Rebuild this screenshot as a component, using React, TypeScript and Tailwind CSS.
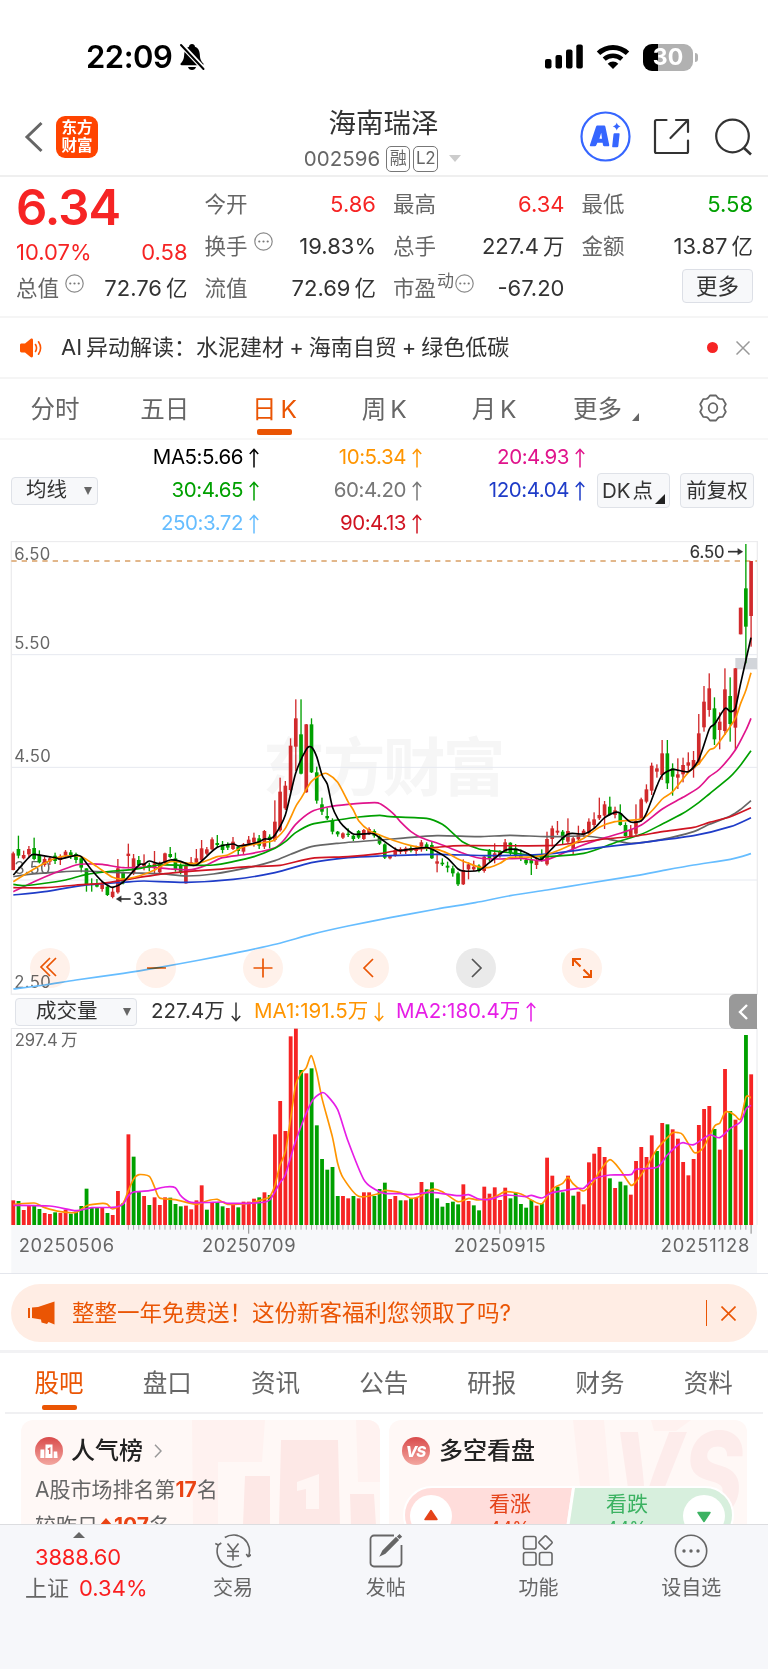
import React from "react";

type Candle = [up: number, bodyTop: number, bodyBottom: number, high: number, low: number];
type Point = [number, number];

// Plot space is three units per css pixel
const FIRST_X = 39.6;
const STEP = 15.7;
const barX = (i: number) => FIRST_X + STEP * i;

const CANDLES: Candle[] = [
  [1, 955, 1005, 950, 1006], [0, 942, 962, 902, 970], [1, 960, 970, 947, 973], [1, 942, 958, 933, 968],
  [0, 939, 972, 908, 976], [0, 960, 982, 946, 985], [1, 972, 990, 965, 995], [1, 970, 980, 964, 990],
  [0, 962, 978, 953, 987], [1, 965, 975, 958, 990], [1, 950, 962, 945, 970], [0, 952, 960, 945, 972],
  [0, 957, 975, 953, 985], [0, 970, 998, 965, 1012], [0, 1000, 1048, 1000, 1070], [0, 1046, 1050, 1030, 1070],
  [0, 1045, 1055, 1032, 1057], [1, 1048, 1062, 1040, 1070], [0, 1055, 1080, 1050, 1083], [1, 1070, 1086, 1055, 1090],
  [1, 1000, 1072, 972, 1076], [0, 1013, 1045, 1010, 1048], [1, 956, 963, 926, 1000], [1, 970, 1015, 957, 1020],
  [0, 975, 990, 963, 995], [1, 985, 993, 958, 1006], [0, 990, 998, 983, 1008], [1, 985, 1000, 948, 1015],
  [1, 985, 1012, 980, 1015], [1, 955, 985, 953, 987], [0, 957, 966, 936, 970], [0, 970, 1003, 953, 1010],
  [0, 990, 1012, 985, 1018], [1, 990, 1045, 985, 1046], [1, 982, 988, 966, 993], [1, 970, 983, 942, 987],
  [1, 940, 975, 915, 978], [1, 943, 956, 936, 960], [1, 913, 943, 907, 946], [0, 924, 930, 900, 936],
  [0, 928, 945, 918, 955], [0, 928, 938, 922, 945], [1, 920, 942, 906, 945], [0, 935, 948, 932, 960],
  [1, 928, 950, 924, 957], [1, 914, 926, 903, 930], [1, 908, 922, 893, 935], [0, 910, 932, 900, 942],
  [1, 888, 935, 885, 942], [0, 905, 915, 898, 940], [1, 860, 915, 796, 920], [1, 770, 886, 728, 890],
  [1, 752, 820, 738, 825], [1, 632, 765, 610, 770], [1, 550, 635, 493, 708], [0, 598, 716, 493, 718],
  [1, 568, 772, 567, 773], [0, 568, 712, 550, 714], [0, 712, 797, 695, 806], [0, 808, 830, 788, 840],
  [0, 843, 850, 818, 855], [0, 858, 890, 850, 898], [0, 890, 898, 888, 905], [1, 895, 908, 892, 912],
  [0, 896, 900, 880, 906], [0, 902, 912, 898, 918], [0, 888, 908, 885, 912], [1, 885, 912, 882, 915],
  [1, 882, 896, 877, 900], [0, 888, 902, 883, 908], [0, 905, 926, 900, 930], [0, 928, 968, 925, 972],
  [1, 963, 970, 960, 973], [1, 945, 963, 937, 965], [1, 942, 950, 937, 957], [1, 940, 950, 935, 957],
  [0, 940, 947, 932, 952], [1, 942, 948, 932, 962], [1, 922, 935, 915, 950], [0, 928, 938, 922, 948],
  [0, 930, 970, 920, 972], [1, 979, 986, 955, 1012], [0, 983, 988, 970, 993], [0, 992, 998, 980, 1012],
  [0, 1000, 1015, 992, 1025], [0, 1015, 1048, 1010, 1053], [1, 1005, 1048, 973, 1050], [1, 988, 1003, 982, 1033],
  [1, 995, 1003, 977, 1008], [0, 992, 1008, 988, 1012], [1, 965, 1008, 962, 1013], [0, 948, 970, 942, 980],
  [1, 955, 968, 925, 985], [1, 950, 962, 945, 968], [1, 922, 950, 912, 953], [0, 923, 952, 922, 960],
  [0, 940, 960, 927, 970], [0, 962, 972, 943, 978], [0, 975, 985, 970, 990], [0, 975, 985, 962, 1020],
  [1, 975, 990, 965, 1002], [0, 965, 975, 943, 980], [1, 912, 988, 890, 992], [1, 880, 912, 872, 935],
  [1, 887, 893, 858, 900], [0, 890, 915, 885, 930], [1, 888, 920, 850, 925], [1, 910, 942, 905, 957],
  [1, 898, 913, 872, 920], [1, 887, 900, 882, 905], [1, 860, 895, 850, 898], [1, 853, 870, 832, 880],
  [1, 840, 850, 788, 855], [1, 808, 842, 798, 882], [0, 815, 838, 785, 842], [1, 826, 840, 815, 850],
  [0, 835, 870, 808, 872], [0, 870, 903, 862, 905], [1, 885, 905, 870, 908], [1, 858, 896, 808, 900],
  [1, 793, 855, 788, 860], [1, 763, 800, 748, 805], [1, 692, 767, 683, 780], [1, 700, 710, 688, 728],
  [1, 655, 720, 615, 735], [0, 655, 745, 615, 762], [0, 700, 725, 685, 782], [1, 718, 728, 670, 762],
  [1, 690, 718, 668, 742], [1, 682, 692, 652, 712], [1, 675, 700, 648, 728], [1, 595, 685, 537, 690],
  [1, 500, 577, 453, 590], [1, 460, 525, 415, 545], [0, 520, 613, 487, 630], [1, 560, 585, 532, 643],
  [1, 463, 588, 400, 600], [0, 483, 567, 427, 620], [1, 400, 578, 399, 645], [1, 218, 298, 218, 298],
  [0, 160, 275, 27, 385], [1, 78, 243, 78, 335],
];

// Negative heights in the list mark falling days
const VOLUMES = [
  646, -648, 675, 662, -660, -672, 684, 687, -682, 684, 674, -686, -680, -663, -611, -668, -668, 668, -684, 690,
  618, -655, 448, -515, -618, 633, -660, 637, 660, 637, -638, -657, -664, 662, 673, 646, 601, -674, 654, -651,
  -664, 669, 655, -667, 650, 650, 641, -637, 622, -630, 448, 348, 438, 154, 131, -255, 265, -250, -421, -522,
  -554, -546, -633, 633, 640, -633, 640, 622, 622, -633, -612, -593, 642, 633, -646, 646, -640, 638, 591, -613,
  -592, -640, -665, -654, -650, -658, 598, 648, -661, -676, 605, 626, 607, 645, 608, -640, -623, -657, -668, -645,
  662, -655, 518, 572, -605, -622, 572, -632, 620, 658, 532, 506, 486, 516, -580, 609, -590, -601, 629, 528,
  486, 516, 451, -498, 414, -418, 433, 461, 531, 571, 522, 420, 372, 363, -432, 494, 252, -378, 404, 494,
  -150, 268,
];

const PRICE_LINES: { color: string; points: Point[] }[] = [
  {
    color: "#66bdff",
    points: [[40, 1362], [134, 1350], [228, 1335], [370, 1315], [479, 1297], [600, 1275], [700, 1255], [830, 1227], [934, 1198], [1044, 1173], [1170, 1148], [1311, 1122], [1426, 1103], [1531, 1082], [1641, 1065], [1751, 1047], [1908, 1022], [1987, 1007], [2081, 990], [2191, 973], [2253, 956]],
  },
  {
    color: "#666666",
    points: [[40, 1025], [86, 1018], [165, 1012], [244, 1008], [340, 1012], [401, 1014], [479, 1016], [558, 1023], [640, 1017], [762, 994], [825, 977], [872, 958], [934, 935], [1013, 925], [1139, 915], [1201, 910], [1311, 902], [1434, 905], [1531, 901], [1641, 905], [1751, 903], [1814, 910], [1892, 925], [1987, 913], [2081, 890], [2128, 868], [2191, 843], [2222, 823], [2253, 797]],
  },
  {
    color: "#e0148c",
    points: [[40, 1070], [102, 1040], [165, 1013], [228, 990], [260, 987], [307, 988], [370, 998], [448, 996], [511, 1002], [575, 1004], [620, 990], [668, 968], [746, 957], [825, 938], [856, 910], [887, 868], [934, 830], [982, 816], [1044, 808], [1123, 803], [1142, 807], [1179, 835], [1201, 860], [1233, 890], [1264, 908], [1327, 930], [1390, 955], [1437, 969], [1500, 972], [1563, 970], [1626, 977], [1673, 962], [1735, 935], [1798, 913], [1861, 895], [1924, 870], [1987, 822], [2049, 787], [2097, 757], [2128, 725], [2159, 702], [2206, 645], [2238, 585], [2253, 550]],
  },
  {
    color: "#00a000",
    points: [[40, 1048], [71, 1052], [118, 1047], [197, 1035], [260, 1018], [340, 1008], [401, 1003], [479, 990], [558, 991], [640, 990], [699, 980], [762, 965], [825, 940], [856, 920], [887, 893], [934, 868], [1013, 855], [1076, 846], [1139, 841], [1170, 845], [1280, 850], [1327, 868], [1359, 895], [1390, 922], [1437, 942], [1500, 950], [1563, 957], [1626, 965], [1751, 955], [1845, 923], [1924, 898], [1987, 867], [2049, 835], [2097, 802], [2128, 777], [2191, 725], [2222, 690], [2253, 647]],
  },
  {
    color: "#1f3cc8",
    points: [[40, 1080], [134, 1070], [244, 1052], [369, 1042], [432, 1038], [558, 1042], [700, 1033], [825, 1013], [934, 983], [1044, 968], [1139, 963], [1311, 958], [1469, 962], [1641, 957], [1751, 943], [1908, 925], [2081, 902], [2191, 875], [2253, 848]],
  },
  {
    color: "#d01422",
    points: [[40, 1058], [134, 1058], [228, 1050], [307, 1045], [401, 1030], [495, 1016], [558, 1010], [652, 1003], [746, 995], [840, 991], [934, 970], [1044, 965], [1139, 956], [1186, 948], [1311, 937], [1390, 932], [1641, 932], [1735, 922], [1814, 912], [1908, 903], [1987, 890], [2081, 877], [2128, 862], [2191, 845], [2253, 818]],
  },
  {
    color: "#ff9500",
    points: [[40, 1040], [102, 1002], [165, 970], [197, 963], [244, 965], [291, 995], [338, 1027], [369, 1032], [417, 1023], [464, 1005], [511, 980], [542, 982], [574, 986], [605, 982], [652, 965], [683, 960], [730, 935], [777, 925], [809, 920], [825, 913], [856, 880], [887, 815], [903, 790], [934, 740], [966, 718], [982, 716], [1013, 742], [1044, 800], [1060, 825], [1076, 857], [1107, 886], [1139, 900], [1186, 918], [1233, 932], [1264, 938], [1311, 943], [1343, 955], [1374, 972], [1406, 985], [1437, 996], [1469, 997], [1500, 985], [1531, 967], [1594, 966], [1634, 960], [1684, 943], [1751, 910], [1798, 877], [1845, 860], [1924, 852], [1955, 828], [1987, 792], [2018, 770], [2065, 712], [2097, 685], [2128, 645], [2144, 638], [2175, 597], [2206, 550], [2222, 505], [2238, 465], [2253, 413]],
  },
  {
    color: "#000000",
    points: [[40, 1020], [86, 968], [102, 958], [165, 968], [181, 972], [228, 961], [244, 965], [275, 1005], [307, 1040], [322, 1050], [338, 1057], [369, 1042], [417, 990], [432, 988], [448, 978], [479, 986], [511, 975], [542, 979], [570, 990], [589, 990], [605, 978], [652, 937], [699, 927], [715, 933], [746, 928], [777, 920], [793, 912], [809, 912], [825, 900], [856, 840], [887, 715], [919, 643], [934, 636], [950, 665], [966, 720], [982, 748], [997, 815], [1013, 850], [1029, 872], [1060, 897], [1107, 896], [1123, 897], [1154, 920], [1186, 942], [1201, 947], [1233, 942], [1280, 938], [1311, 950], [1343, 970], [1374, 1002], [1390, 1008], [1437, 1006], [1469, 982], [1516, 946], [1547, 943], [1578, 953], [1610, 970], [1626, 972], [1657, 940], [1704, 897], [1751, 897], [1782, 880], [1814, 848], [1845, 832], [1861, 835], [1892, 861], [1924, 857], [1940, 833], [1971, 752], [1987, 720], [2018, 703], [2065, 710], [2097, 672], [2128, 582], [2144, 567], [2175, 520], [2191, 530], [2206, 520], [2222, 445], [2253, 308]],
  },
];

const VOLUME_LINES: { color: string; points: Point[] }[] = [
  {
    color: "#ff9500",
    points: [[40, 658], [102, 654], [118, 660], [134, 668], [181, 680], [228, 682], [260, 662], [307, 655], [322, 658], [338, 672], [369, 655], [385, 617], [401, 582], [417, 569], [448, 574], [464, 607], [479, 639], [526, 644], [589, 658], [620, 648], [652, 643], [683, 658], [746, 655], [793, 642], [809, 635], [825, 600], [840, 540], [856, 500], [872, 400], [887, 300], [903, 265], [919, 248], [934, 212], [950, 262], [966, 340], [997, 455], [1013, 535], [1029, 578], [1076, 634], [1139, 625], [1154, 616], [1201, 623], [1233, 640], [1264, 632], [1296, 613], [1327, 620], [1374, 650], [1406, 640], [1437, 645], [1484, 636], [1516, 620], [1563, 627], [1594, 645], [1626, 656], [1657, 612], [1688, 595], [1704, 577], [1720, 597], [1751, 618], [1782, 588], [1798, 560], [1830, 524], [1861, 555], [1892, 600], [1908, 590], [1940, 545], [1971, 492], [2002, 458], [2018, 443], [2034, 443], [2049, 450], [2081, 501], [2097, 500], [2112, 485], [2144, 423], [2159, 415], [2175, 382], [2191, 382], [2206, 392], [2222, 402], [2238, 336], [2253, 338]],
  },
  {
    color: "#e61ee6",
    points: [[40, 661], [149, 663], [228, 677], [275, 668], [338, 667], [369, 658], [385, 632], [401, 621], [448, 617], [495, 606], [526, 608], [542, 632], [574, 652], [668, 651], [683, 655], [777, 653], [809, 645], [840, 593], [856, 570], [887, 468], [934, 352], [966, 323], [982, 332], [1013, 374], [1044, 468], [1091, 583], [1123, 612], [1154, 625], [1201, 626], [1233, 629], [1296, 622], [1374, 632], [1406, 629], [1437, 642], [1469, 643], [1516, 630], [1578, 635], [1594, 631], [1626, 639], [1657, 623], [1735, 610], [1751, 610], [1782, 582], [1830, 570], [1892, 569], [1908, 553], [1971, 547], [2002, 510], [2034, 480], [2049, 473], [2081, 479], [2128, 450], [2159, 458], [2191, 430], [2222, 410], [2238, 372], [2253, 361]],
  },
];

// Catmull-Rom through the points, softened so peaks don't overshoot
function smooth(points: Point[]) {
  let d = `M${points[0][0]} ${points[0][1]}`;
  for (let i = 0; i < points.length - 1; i++) {
    const p0 = points[i - 1] || points[i];
    const p1 = points[i];
    const p2 = points[i + 1];
    const p3 = points[i + 2] || p2;
    const k = 8;
    d += `C${p1[0] + (p2[0] - p0[0]) / k} ${p1[1] + (p2[1] - p0[1]) / k} ${p2[0] - (p3[0] - p1[0]) / k} ${p2[1] - (p3[1] - p1[1]) / k} ${p2[0]} ${p2[1]}`;
  }
  return d;
}

const StatusBar: React.FC = () => (
  <div className="h-[96px] flex items-start justify-between pl-[86px] pr-[70px] pt-[39px]">
    <div className="flex items-center gap-[7px] h-[36px]">
      <span className="text-[31px] leading-[36px] font-semibold text-black tracking-[-0.5px]">22:09</span>
      <svg className="w-[26px] h-[28px]" viewBox="0 0 26 28">
        <path
          d="M13 1c1.700 0 2.800 1.100 3 2.700 3 1.100 4.600 3.800 4.800 7.600.2 4.600 1 6.700 3.400 9 .8.9.3 2-.9 2H2.700c-1.200 0-1.700-1.100-.9-2 2.400-2.300 3.200-4.400 3.400-9C5.400 7.500 7 4.800 10 3.700 10.200 2.100 11.300 1 13 1z"
          fill="#000"
        />
        <path d="M9 24h8c-.5 2-2 3-4 3s-3.500-1-4-3z" fill="#000" />
        <path d="M1.500 1l24 25.500" stroke="#fff" strokeWidth="5" />
        <path d="M2 2l22.500 24" stroke="#000" strokeWidth="2" strokeLinecap="round" />
      </svg>
    </div>
    <div className="flex items-center h-[36px]">
      <svg className="w-[39px] h-[26px]" viewBox="0 0 39 26">
        <rect x="0" y="15" width="6.500" height="9.500" rx="2" />
        <rect x="10.500" y="11" width="6.500" height="13.500" rx="2" />
        <rect x="21" y="5.500" width="6.500" height="19" rx="2" />
        <rect x="31.300" y="0.500" width="6.500" height="24" rx="2" />
      </svg>
      <svg className="w-[34px] h-[26px] ml-[12px]" viewBox="0 0 34 26">
        <path d="M2.500 9.200a21 21 0 0 1 29 0" fill="none" stroke="#000" strokeWidth="5" />
        <path d="M8.200 15.200a13 13 0 0 1 17.600 0" fill="none" stroke="#000" strokeWidth="4.500" />
        <path d="M17 25l-5.300-5.300a7.800 7.800 0 0 1 10.600 0z" fill="#000" />
      </svg>
      <div className="ml-[13px] w-[50px] h-[27px] rounded-[9px] overflow-hidden flex bg-[#b1b1b1] relative">
        <span className="w-[15px] h-full bg-black" />
        <span className="absolute inset-0 text-center text-white font-bold text-[23px] leading-[27px]">30</span>
      </div>
      <span className="w-[3px] h-[9px] ml-[2px] rounded-r-full bg-[#b1b1b1]" />
    </div>
  </div>
);

const Header: React.FC = () => (
  <div className="h-[81px] border-b-2 border-[#efefef] flex items-start justify-between pl-[24px] pr-[16px]">
    <div className="w-[220px] flex items-center gap-[12px] h-[81px]">
      <svg className="w-[20px] h-[32px]" viewBox="0 0 20 32">
        <path d="M17.500 2L3 16l14.500 14" fill="none" stroke="#666" strokeWidth="3" />
      </svg>
      <div className="w-[42px] h-[42px] rounded-[9px] bg-[#ff4400] text-white font-bold text-[15.500px] leading-[18px] text-center pt-[3px]">
        <div>东方</div>
        <div>财富</div>
      </div>
    </div>
    <div className="flex flex-col items-center">
      <div className="text-[27.500px] leading-[36px] text-[#333] mt-[9px] -ml-px">海南瑞泽</div>
      <div className="flex items-center h-[36px] pr-[3px]">
        <span className="text-[20.500px] text-[#666] leading-[26px]">002596</span>
        <span className="ml-[6px] w-[24px] h-[26px] border-[1.500px] border-[#777] rounded-[5px] text-[17px] leading-[23px] text-center text-[#666]">融</span>
        <span className="ml-[3px] w-[25px] h-[26px] border-[1.500px] border-[#777] rounded-[5px] text-[17px] leading-[23px] text-center text-[#666] tracking-tight">L2</span>
        <svg className="ml-[11px] w-[12px] h-[8px]" viewBox="0 0 12 8">
          <path d="M0 0h12L6 7z" fill="#ccc" />
        </svg>
      </div>
    </div>
    <div className="w-[228px] flex items-center justify-end h-[81px]">
      <svg className="w-[51px] h-[51px]" viewBox="0 0 51 51" fill="#3666ff">
        <circle cx="25.500" cy="25.500" r="24" fill="none" stroke="#3666ff" strokeWidth="2.200" />
        <path
          fillRule="evenodd"
          d="M17.500 14.500h6.300c.9 0 1.400.5 1.600 1.300l3.800 18c.2 1-.2 1.500-1.200 1.500h-3.700c-.8 0-1.200-.4-1.300-1.200l-.4-2.400h-5.200l-1 2.400c-.3.8-.8 1.200-1.600 1.200H11c-1 0-1.400-.6-1-1.500l6-18c.3-.9.8-1.300 1.500-1.300zM19.400 27.800h2.600l-.8-6z"
        />
        <path d="M34.500 22.200h4.200c.6 0 1 .4.900 1l-1.300 12c-.1.700-.5 1-1.100 1h-4.100c-.7 0-1-.4-.9-1l1.300-12c.1-.7.5-1 1-1z" />
        <path d="M36.800 11.500c.6 2.400 1.400 3.200 3.800 4-2.400.8-3.200 1.600-3.800 4-.8-2.400-1.600-3.200-4-4 2.400-.8 3.200-1.600 4-4z" />
      </svg>
      <svg className="w-[37px] h-[37px] ml-[22px]" viewBox="0 0 37 37" fill="none" stroke="#333" strokeWidth="2.200" strokeLinejoin="round" strokeLinecap="round">
        <path d="M13.500 2H3.500a1.500 1.500 0 0 0-1.500 1.500v30A1.500 1.500 0 0 0 3.500 35h30a1.500 1.500 0 0 0 1.500-1.500v-11" />
        <path d="M23 2h12v12M35 2L17.500 20" />
      </svg>
      <svg className="w-[37px] h-[38px] ml-[25px]" viewBox="0 0 37 38" fill="none" stroke="#333" strokeWidth="2.200">
        <circle cx="17.500" cy="18" r="16.300" />
        <path d="M28.500 29.500l7.500 7" strokeWidth="2.600" />
      </svg>
    </div>
  </div>
);

const Dots: React.FC = () => (
  <svg className="w-[19px] h-[19px] mb-[9px] ml-[6px]" viewBox="0 0 19 19">
    <circle cx="9.500" cy="9.500" r="8.700" fill="none" stroke="#8a8a8a" strokeWidth="1.200" />
    <circle cx="5.300" cy="9.500" r="1.100" fill="#777" />
    <circle cx="9.500" cy="9.500" r="1.100" fill="#777" />
    <circle cx="13.700" cy="9.500" r="1.100" fill="#777" />
  </svg>
);

const Stat: React.FC<{ label: string; value: string; unit?: string; color?: string; dots?: boolean; sup?: string }> = ({
  label,
  value,
  unit,
  color = "text-[#333]",
  dots,
  sup,
}) => (
  <div className="flex items-center justify-between h-[42px] whitespace-nowrap">
    <span className="flex items-center text-[21.500px] text-[#666]">
      {label}
      {sup && <span className="text-[17px] mb-[12px] ml-[1px] -mr-[5px]">{sup}</span>}
      {dots && <Dots />}
    </span>
    <span className={`text-[22px] ${color}`}>
      {value}
      {unit && <span className="ml-[4px] text-[21.500px]">{unit}</span>}
    </span>
  </div>
);

const Quote: React.FC = () => (
  <div className="h-[141px] border-b-2 border-[#f5f5f5] grid grid-cols-4 gap-x-[17px] pl-[16px] pr-[15px] pt-[6px]">
    <div>
      <div className="h-[48px] pt-px text-[49px] leading-[48px] font-semibold text-[#f62424] tracking-[-1px]">6.34</div>
      <div className="h-[36px] pt-[6px] flex items-center justify-between text-[22px] text-[#f62424]">
        <span>10.07%</span>
        <span>0.58</span>
      </div>
      <Stat label="总值" value="72.76" unit="亿" dots />
    </div>
    <div>
      <Stat label="今开" value="5.86" color="text-[#f62424]" />
      <Stat label="换手" value="19.83%" dots />
      <Stat label="流值" value="72.69" unit="亿" />
    </div>
    <div>
      <Stat label="最高" value="6.34" color="text-[#f62424]" />
      <Stat label="总手" value="227.4" unit="万" />
      <Stat label="市盈" value="-67.20" sup="动" dots />
    </div>
    <div>
      <Stat label="最低" value="5.58" color="text-[#00a000]" />
      <Stat label="金额" value="13.87" unit="亿" />
      <div className="flex justify-end pt-[2px]">
        <button className="w-[71px] h-[34px] border border-[#dcdfe6] bg-[#f7f8fa] rounded-[4px] text-[21.500px] leading-[32px] text-[#333]">更多</button>
      </div>
    </div>
  </div>
);

const AiRow: React.FC = () => (
  <div className="h-[61px] border-b-2 border-[#f5f5f5] flex items-center pl-[20px] pr-[18px]">
    <svg className="w-[23px] h-[20px]" viewBox="0 0 23 20">
      <path d="M1.500 5.500H5L10.500 1c1.200-.9 2.500-.3 2.500 1v16c0 1.300-1.300 1.900-2.500 1L5 14.500H1.500c-.8 0-1.500-.6-1.500-1.400V6.900c0-.8.7-1.400 1.500-1.400z" fill="#ff5500" />
      <path d="M15.500 6.500c1.300 2.200 1.300 4.800 0 7M18.500 3.800c2.500 3.700 2.500 8.700 0 12.400" fill="none" stroke="#ff5500" strokeWidth="1.600" strokeLinecap="round" />
    </svg>
    <span className="ml-[18px] text-[22px] text-[#333] whitespace-nowrap">
      AI<span className="ml-[4px]">异动解读：</span>水泥建材<span className="mx-[5px]">+</span>海南自贸<span className="mx-[5px]">+</span>绿色低碳
    </span>
    <span className="ml-auto w-[11px] h-[11px] rounded-full bg-[#f62424]" />
    <svg className="w-[14px] h-[14px] ml-[18px]" viewBox="0 0 14 14">
      <path d="M.5.500l13 13M13.500.500l-13 13" stroke="#999" strokeWidth="1.500" />
    </svg>
  </div>
);

const PERIODS = ["分时", "五日", "日 K", "周 K", "月 K"];

const PeriodTabs: React.FC = () => (
  <div className="h-[61px] border-b-2 border-[#f7f7f7] flex text-[24.500px] text-[#666]">
    {PERIODS.map((p) => (
      <div key={p} className={`w-[109.800px] flex flex-col items-center ${p === "日 K" ? "text-[#ea5504]" : ""}`}>
        <span className="h-[50px] leading-[60px] [word-spacing:-3px]">{p}</span>
        {p === "日 K" && <span className="w-[35px] h-[6px] rounded-[2px] bg-[#ea5504]" />}
      </div>
    ))}
    <div className="flex pl-[24px] w-[126px]">
      <span className="leading-[60px]">更多</span>
      <svg className="w-[7px] h-[8px] mt-[34px] ml-[10px]" viewBox="0 0 7 8">
        <path d="M7 0v8H0z" fill="#666" />
      </svg>
    </div>
    <svg className="w-[28px] h-[28px] mt-[15px] ml-[24px]" viewBox="0 0 28 28" fill="none" stroke="#666" strokeWidth="1.800">
      <path d="M11 1.500h6l2 2.500c.5.500 1 .8 1.800.9l3 .2 3 5.200-1.400 2.600c-.3.700-.3 1.500 0 2.200l1.400 2.600-3 5.200-3 .2c-.8.100-1.300.4-1.800.9l-2 2.500h-6l-2-2.500c-.5-.5-1-.8-1.800-.9l-3-.2-3-5.200 1.400-2.600c.3-.7.3-1.500 0-2.200L1.200 10.300l3-5.200 3-.2c.8-.1 1.300-.4 1.800-.9z" strokeLinejoin="round" />
      <ellipse cx="14" cy="14" rx="4.300" ry="4.800" />
    </svg>
  </div>
);

const Arrow: React.FC<{ down?: boolean }> = ({ down }) => (
  <svg className={`w-[10px] h-[20px] shrink-0 ${down ? "rotate-180" : ""}`} viewBox="0 0 10 20" fill="none" stroke="currentColor" strokeWidth="1.500">
    <path d="M5 19.500V1.500M.8 6L5 1.300 9.200 6" />
  </svg>
);

const MA_LEGEND = [
  ["MA5:5.66", "text-black"],
  ["10:5.34", "text-[#ff9500]"],
  ["20:4.93", "text-[#e0148c]"],
  ["30:4.65", "text-[#00a000]"],
  ["60:4.20", "text-[#777]"],
  ["120:4.04", "text-[#1f3cc8]"],
  ["250:3.72", "text-[#66bdff]"],
  ["90:4.13", "text-[#d01422]"],
];

const MaLegend: React.FC = () => (
  <div className="h-[101px] flex items-center pl-[11px] pr-[14px]">
    <div className="w-[87px] h-[28px] rounded-[4px] border border-[#dfe2e8] bg-[#f7f8fa] flex items-center justify-between pl-[14px] pr-[5px] text-[20.500px] text-[#333] leading-none">
      均线
      <svg className="w-[8px] h-[8px]" viewBox="0 0 8 8">
        <path d="M0 0h8L4 8z" fill="#666" />
      </svg>
    </div>
    <div className="w-[487px] grid grid-cols-[161px_163px_163px] text-[20.500px]">
      {MA_LEGEND.map(([text, color]) => (
        <span key={text} className={`h-[33px] flex items-center justify-end gap-[6px] tracking-[-0.45px] ${color}`}>
          {text}
          <Arrow />
        </span>
      ))}
    </div>
    <div className="ml-auto flex gap-[10px] text-[20.500px] text-[#333]">
      <div className="w-[73px] h-[35px] rounded-[4px] border border-[#dfe2e8] bg-[#f7f8fa] pl-[4px] leading-[33px] relative whitespace-nowrap">
        DK<span className="ml-[2px]">点</span>
        <svg className="absolute right-[4px] bottom-[3px] w-[10px] h-[10px]" viewBox="0 0 10 10">
          <path d="M10 0v10H0z" fill="#222" />
        </svg>
      </div>
      <div className="w-[74px] h-[35px] rounded-[4px] border border-[#dfe2e8] bg-[#f7f8fa] text-center leading-[33px]">前复权</div>
    </div>
  </div>
);

const TOOL_ICONS = [
  "M20 10l-9 9 9 9M26 10l-9 9 9 9",
  "M11 20h19",
  "M10.500 20h19M20 10.500v19",
  "M24 11l-9 9 9 9",
  "M16 11l9 9-9 9",
  "M11 18v-7h8M11.500 11.500l7 7M29 22v7h-8M28.500 28.500l-7-7",
];

const PriceChart: React.FC = () => (
  <div className="relative h-[454px]">
    <svg className="block w-[768px] h-[454px]" viewBox="0 18 2304 1362">
      <text x="1152" y="766" textAnchor="middle" fontSize="188" fontWeight="700" fill="#f6f6f6" textLength="728">东方财富</text>
      <g stroke="#e6e9f0" strokeWidth="3">
        <path d="M34 359H2271M34 697H2271M34 1035H2271" />
      </g>
      <rect x="34" y="19.500" width="2238" height="1358" fill="none" stroke="#ececee" strokeWidth="4" />
      <g fontSize="50" fill="#666" letterSpacing="1">
        <text x="43" y="74">6.50</text>
        <text x="43" y="342">5.50</text>
        <text x="43" y="681">4.50</text>
        <text x="43" y="1018">3.50</text>
        <text x="43" y="1358">2.50</text>
      </g>
      <path d="M34 78H2271" stroke="#d9a066" strokeWidth="5" strokeDasharray="16 15" />
      <rect x="2206" y="369" width="65" height="34" fill="#d2d5da" />
      {CANDLES.map(([up, top, bottom, high, low], i) => (
        <g key={i} fill={up ? "#d12a2c" : "#00a000"}>
          <rect x={barX(i) - 2} y={high} width="4" height={low - high} />
          <rect x={barX(i) - 5.500} y={top} width="11" height={bottom - top} />
        </g>
      ))}
      {PRICE_LINES.map((line) => (
        <path key={line.color} d={smooth(line.points)} fill="none" stroke={line.color} strokeWidth="5" strokeLinejoin="round" />
      ))}
      <g fontSize="50" fill="#333" stroke="#333" strokeWidth="0.500">
        <text x="399" y="1111">3.33</text>
        <path d="M392 1092H355" strokeWidth="5" />
        <path d="M348 1092l16-10v20z" />
        <text x="2069" y="70">6.50</text>
        <path d="M2184 50H2220" strokeWidth="5" />
        <path d="M2229 50l-16-10v20z" />
      </g>
    </svg>
    {/* Zoom and pan buttons float above the plot */}
    <div className="absolute left-[30px] bottom-[7px] w-[572px] flex justify-between mix-blend-multiply">
      {TOOL_ICONS.map((d, i) => (
        <svg key={d} className={`w-[40px] h-[40px] rounded-full ${i === 4 ? "bg-[#eaeaea]" : "bg-[#fff1ea]"}`} viewBox="0 0 40 40">
          <path d={d} fill="none" stroke={i === 4 ? "#555" : "#ea5504"} strokeWidth={i === 5 ? 2 : 1.700} />
        </svg>
      ))}
    </div>
  </div>
);

const VolumeHeader: React.FC = () => (
  <div className="h-[33px] flex items-center pl-[15px] pr-[11px] text-[20.500px] relative whitespace-nowrap">
    <div className="w-[122px] h-[28px] rounded-[4px] border border-[#dfe2e8] bg-[#f7f8fa] flex items-center justify-between pl-[20px] pr-[5px] text-[#333]">
      成交量
      <svg className="w-[8px] h-[8px]" viewBox="0 0 8 8">
        <path d="M0 0h8L4 8z" fill="#666" />
      </svg>
    </div>
    <span className="w-[103px] pl-[14px] flex items-center gap-[6px] text-[#333]">227.4万<Arrow down /></span>
    <span className="w-[143px] pl-[14px] flex items-center gap-[6px] text-[#ff9500]">MA1:191.5万<Arrow down /></span>
    <span className="pl-[13px] flex items-center gap-[6px] text-[#e61ee6]">MA2:180.4万<Arrow /></span>
    <div className="ml-auto w-[28px] h-[35px] rounded-l-[6px] bg-[#999] flex items-center justify-center">
      <svg className="w-[10px] h-[16px]" viewBox="0 0 10 16">
        <path d="M9 1L2 8l7 7" fill="none" stroke="#fff" strokeWidth="2.400" />
      </svg>
    </div>
  </div>
);

const VolumeChart: React.FC = () => (
  <svg className="block w-[768px] h-[246px]" viewBox="0 129 2304 738">
    <rect x="34" y="720" width="2237" height="147" fill="#f7f8fa" />
    <path d="M34 130.500H2271M34 129V720M2271 129V720" stroke="#e8e9ec" strokeWidth="3" />
    <path d="M0 865.500H2304" stroke="#e4e6ec" strokeWidth="3" />
    {VOLUMES.map((v, i) => (
      <g key={i}>
        <rect x={barX(i) - 5.500} y={Math.abs(v)} width="11.500" height={720 - Math.abs(v)} fill={v > 0 ? "#f62424" : "#00a000"} />
        {i > 21 && <rect x={barX(i) - 1.500} y="720" width="3" height={[45, 93, 141].includes(i) ? 26 : 14} fill={[45, 93, 141].includes(i) ? "#888" : "#aaa"} />}
      </g>
    ))}
    {VOLUME_LINES.map((line) => (
      <path key={line.color} d={smooth(line.points)} fill="none" stroke={line.color} strokeWidth="5" strokeLinejoin="round" />
    ))}
    <text x="44" y="182" fontSize="50" fill="#666">
      297.4<tspan dx="10">万</tspan>
    </text>
    <g fontSize="55" fill="#666">
      <text x="56" y="801" textLength="286">20250506</text>
      <text x="606" y="801" textLength="281">20250709</text>
      <text x="1362" y="801" textLength="275">20250915</text>
      <text x="1982" y="801" textLength="266">20251128</text>
    </g>
  </svg>
);

const Banner: React.FC = () => (
  <div className="h-[79px] pt-[10px] px-[11px] border-b-[3px] border-[#f2f2f4]">
    <div className="h-[58px] rounded-[29px] bg-[#ffede4] flex items-center pl-[17px] pr-[21px] text-[#ea5504]">
      <svg className="w-[27px] h-[24px]" viewBox="0 0 27 24" fill="#ea5504">
        <rect x="0" y="7" width="2" height="10" />
        <path d="M4 6.500L10 6 26.500.500v23l-6-2.500-1.500 2-5.500-1.500-.5-3L4 17z" />
      </svg>
      <span className="ml-[17px] text-[22.500px] whitespace-nowrap">整整一年免费送！这份新客福利您领取了吗?</span>
      <span className="ml-auto w-[1.500px] h-[26px] bg-[#ea5504]" />
      <svg className="ml-[14px] w-[15px] h-[15px]" viewBox="0 0 15 15">
        <path d="M.5.500l14 14M14.500.500l-14 14" stroke="#ea5504" strokeWidth="1.600" />
      </svg>
    </div>
  </div>
);

const SECTIONS = ["股吧", "盘口", "资讯", "公告", "研报", "财务", "资料"];

const SectionTabs: React.FC = () => (
  <div className="h-[61px] mx-[5px] border-b-2 border-[#f0f0f2] flex text-[24.500px] text-[#666]">
    {SECTIONS.map((s, i) => (
      <div key={s} className={`w-[108.200px] flex flex-col items-center ${i === 0 ? "text-[#ea5504]" : ""}`}>
        <span className="h-[52px] leading-[61px]">{s}</span>
        {i === 0 && <span className="w-[35px] h-[5px] rounded-[2px] bg-[#ea5504]" />}
      </div>
    ))}
  </div>
);

const Cards: React.FC = () => (
  <div className="h-[110px] overflow-hidden flex gap-[9px] pl-[21px] pt-[6px]">
    <div className="w-[359px] h-[160px] shrink-0 rounded-[12px] bg-[#fff8f6] overflow-hidden relative">
      <svg className="absolute inset-0 w-[359px] h-[105px]" viewBox="0 0 359 105">
        <path d="M171 0h73l-3 42h-44v63h-25z" fill="#fff2f0" />
        <path d="M335 0h24v62h-22z" fill="#fff2f0" />
        <path d="M224 56h25v49h-27zM260 20h57l2 85h-61zM329 74h24l2 31h-25z" fill="#fde8e6" />
        <path d="M276 62l22-8v35h-13V69l-9 2z" fill="#fff6f4" />
      </svg>
      <div className="relative pl-[14px] pt-[14px]">
        <div className="flex items-center h-[34px]">
          <svg className="w-[28px] h-[28px]" viewBox="0 0 28 28">
            <defs>
              <linearGradient id="badge" x1="0" y1="0" x2="0" y2="1">
                <stop offset="0" stopColor="#d94b4b" />
                <stop offset="1" stopColor="#f3a7a0" />
              </linearGradient>
            </defs>
            <circle cx="14" cy="14" r="14" fill="url(#badge)" />
            <path d="M5.500 12.500h3.800V21h-4zM10.500 7.500h7V21h-7.200zM18.700 14.500h3.500l.4 6.500h-3.900z" fill="#fff" />
            <path d="M12.800 12.300l1.900-1v5.700" fill="none" stroke="#dc6a67" strokeWidth="1.500" />
          </svg>
          <span className="ml-[8px] text-[24px] text-[#222] font-medium">人气榜</span>
          <svg className="ml-[11px] w-[8px] h-[14px]" viewBox="0 0 8 14">
            <path d="M1 .8L7 7l-6 6.200" fill="none" stroke="#999" strokeWidth="1.500" />
          </svg>
        </div>
        <div className="mt-[5px] text-[21px] leading-[34px] text-[#666]">
          A股市场排名第<b className="text-[#ea4313]">17</b>名
        </div>
        <div className="text-[21px] leading-[34px] mt-[2px] text-[#666] flex items-center">
          较昨日
          <svg className="w-[14px] h-[16px] mx-px" viewBox="0 0 14 16">
            <path d="M7 0l7 8h-4v8H4V8H0z" fill="#ea4313" />
          </svg>
          <b className="text-[#ea4313]">107</b>名
        </div>
      </div>
    </div>
    <div className="w-[358px] h-[160px] shrink-0 rounded-[12px] bg-[#fff8f6] overflow-hidden relative">
      <svg className="absolute inset-0 w-[358px] h-[105px]" viewBox="0 0 358 105">
        <path d="M184 0h31l6 66h-30zM262 0h40l-15 11h-22z" fill="#fff2f0" />
        <text x="222" y="96" fontSize="116" fontWeight="800" fontStyle="italic" fill="#fdeceb" textLength="132" lengthAdjust="spacingAndGlyphs">VS</text>
      </svg>
      <div className="relative pl-[13px] pt-[14px]">
        <div className="flex items-center h-[34px]">
          <svg className="w-[28px] h-[28px]" viewBox="0 0 28 28">
            <circle cx="14" cy="14" r="14" fill="url(#badge)" />
            <text x="13.500" y="19.500" textAnchor="middle" fontSize="15" fontWeight="800" fontStyle="italic" fill="#fff" letterSpacing="-1">VS</text>
          </svg>
          <span className="ml-[9px] text-[24px] text-[#222] font-medium">多空看盘</span>
        </div>
      </div>
      <div className="absolute left-[14px] top-[66px] w-[331px] h-[58px] rounded-[29px] border-2 border-white overflow-hidden flex text-[21px]">
        <svg className="absolute inset-0 w-[327px] h-[54px]" viewBox="0 0 327 54">
          <path d="M0 0h167l-8 54H0z" fill="#ffdddb" />
          <path d="M167 0h3l-8 54h-3z" fill="#fff" />
          <path d="M170 0h157v54H162z" fill="#d7efdd" />
          <circle cx="26" cy="28" r="21" fill="#fff" />
          <circle cx="299" cy="28" r="21" fill="#fff" />
          <path d="M26 22.500l6 9H20z" strokeWidth="1.500" strokeLinejoin="round" fill="#e5431a" stroke="#e5431a" />
          <path d="M299 33.500l6-9h-12z" strokeWidth="1.500" strokeLinejoin="round" fill="#3cb262" stroke="#3cb262" />
        </svg>
        <div className="relative w-[212px] pl-[84px] leading-[32px] text-[#e5431a]">
          看涨
          <div className="text-[18px] leading-[18px]">44%</div>
        </div>
        <div className="relative -ml-[11px] leading-[32px] text-[#3cb262]">
          看跌
          <div className="text-[18px] leading-[18px]">44%</div>
        </div>
      </div>
    </div>
  </div>
);

const NavItem: React.FC<{ label: string; children: React.ReactNode }> = ({ label, children }) => (
  <div className="w-[152.800px] flex flex-col items-center pt-[8px] text-[20px] text-[#666]">
    <svg className="w-[36px] h-[36px]" viewBox="0 0 36 36" fill="none" stroke="#666" strokeWidth="1.600">
      {children}
    </svg>
    <span className="leading-[30px] mt-[4px]">{label}</span>
  </div>
);

const BottomNav: React.FC = () => (
  <div className="h-[145px] border-t border-[#dcdde0] bg-[#f6f7fa] flex">
    <div className="w-[156.500px] relative">
      <svg className="absolute left-[73px] top-[7px] w-[12px] h-[6px]" viewBox="0 0 12 6">
        <path d="M6 0l6 6H0z" fill="#666" />
      </svg>
      <div className="pl-[35px] pt-[16px] text-[22px] leading-[32px] text-[#fa1f1f] tracking-[-0.200px]">3888.60</div>
      <div className="pl-[25px] text-[22px] leading-[30px] text-[#fa1f1f] whitespace-nowrap">
        <span className="text-[#666] mr-[10px]">上证</span>0.34%
      </div>
    </div>
    <NavItem label="交易">
      <path d="M9.500 4.500A16 16 0 0 1 33 24M33 24l-2-3M33 24l3-2.500M26.500 31.500A16 16 0 0 1 3 12M3 12l-3-1.500M3 12l3-2" transform="translate(.3 0)" />
      <path d="M12.500 10.500l5.500 7 5.500-7M18 17.500v10M12 18.500h12M12 23h12" />
    </NavItem>
    <NavItem label="发帖">
      <path d="M26 2.500H6A3.500 3.500 0 0 0 2.500 6v24A3.500 3.500 0 0 0 6 33.500h24a3.500 3.500 0 0 0 3.500-3.500V12" strokeWidth="1.800" />
      <path d="M13 22l2-4L28 5l2 2-13 13zM30 3.500l1.500-1.300 1.500 1.500L31.500 5z" fill="#666" />
    </NavItem>
    <NavItem label="功能">
      <rect x="3.500" y="3.500" width="12.500" height="12.500" rx="2" />
      <rect x="3.500" y="19.500" width="12.500" height="12.500" rx="2" />
      <rect x="19.500" y="19.500" width="12.500" height="12.500" rx="2" />
      <rect x="20.500" y="4.500" width="10" height="10" rx="1" transform="rotate(45 25.500 9.500)" />
    </NavItem>
    <NavItem label="设自选">
      <circle cx="18" cy="18" r="15.700" />
      <g fill="#666" stroke="none">
        <circle cx="11" cy="18" r="1.700" />
        <circle cx="18" cy="18" r="1.700" />
        <circle cx="25" cy="18" r="1.700" />
      </g>
    </NavItem>
  </div>
);

export default function App() {
  return (
    <div className="w-[768px] h-[1669px] bg-white overflow-hidden font-['Inter','Noto_Sans_CJK_SC',sans-serif]">
      <StatusBar />
      <Header />
      <Quote />
      <AiRow />
      <PeriodTabs />
      <MaLegend />
      <PriceChart />
      <VolumeHeader />
      <VolumeChart />
      <Banner />
      <SectionTabs />
      <Cards />
      <BottomNav />
    </div>
  );
}
